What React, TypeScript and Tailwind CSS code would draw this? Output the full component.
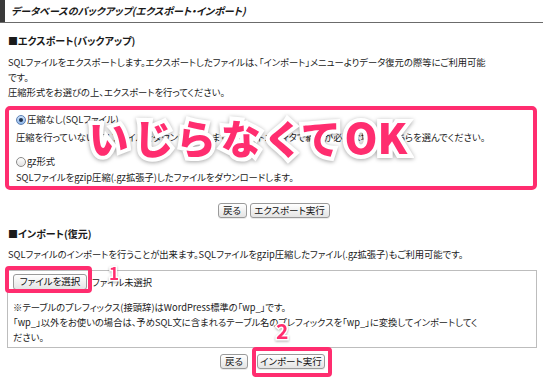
import React from "react";

function Btn({ children, className = "" }: { children: React.ReactNode; className?: string }) {
  return (
    <div
      className={
        "h-[15px] px-[5px] flex items-center justify-center whitespace-nowrap rounded-[3px] border border-[#9a9a9a] bg-gradient-to-b from-white to-[#e4e4e4] text-[9.5px] leading-none text-[#111] shadow-[0_1px_0_rgba(0,0,0,0.08)] " +
        className
      }
    >
      {children}
    </div>
  );
}

function Radio({ checked }: { checked?: boolean }) {
  return (
    <span
      className={
        "inline-flex w-[10px] h-[10px] rounded-full border items-center justify-center mr-[1px] " +
        (checked
          ? "border-[#5b7fb3] bg-gradient-to-b from-[#cfe3fb] to-[#8fb6e8]"
          : "border-[#8a8a8a] bg-gradient-to-b from-white to-[#e2e2e2]")
      }
    >
      {checked && <span className="w-[4px] h-[4px] rounded-full bg-[#1d2f4c]" />}
    </span>
  );
}

export default function App() {
  return (
    <div className="w-[546px] h-[382px] bg-white overflow-hidden relative text-[#1a1a1a] font-['Noto_Sans_CJK_JP','Noto_Sans',sans-serif] [font-feature-settings:'palt'] text-[9.3px] leading-[15px]">
      {/* header */}
      <div className="flex h-[23px] border-b border-[#6b6b6b] mr-[3px]">
        <div className="w-[5px] bg-[#3a3a3a]" />
        <div className="pl-[6px] text-[10px] font-bold italic leading-[22px]">
          データベースのバックアップ(エクスポート・インポート)
        </div>
      </div>

      {/* export heading */}
      <div className="ml-[8px] mt-[11px] text-[10px] font-bold leading-[14px]">■エクスポート(バックアップ)</div>
      <div className="ml-[8px] mt-[7px] whitespace-nowrap">
        <div>SQLファイルをエクスポートします。エクスポートしたファイルは、「インポート」メニューよりデータ復元の際等にご利用可能</div>
        <div>です。</div>
        <div>圧縮形式をお選びの上、エクスポートを行ってください。</div>
      </div>

      {/* pink box */}
      <div className="ml-[5px] mt-[6px] w-[532px] h-[84px] border-[4px] border-[#ff2d6f] rounded-[5px] pl-[7px] pt-[2px] whitespace-nowrap">
        <div className="flex items-center">
          <Radio checked />
          <span>圧縮なし(SQLファイル)</span>
        </div>
        <div className="mt-[3px]">圧縮を行っていないSQLファイルをダウンロードします。テキストエディタで編集が必要な場合はこちらを選んでください。</div>
        <div className="mt-[9px] flex items-center">
          <Radio />
          <span>gz形式</span>
        </div>
        <div className="mt-[1px]">SQLファイルをgzip圧縮(.gz拡張子)したファイルをダウンロードします。</div>
      </div>

      {/* export buttons */}
      <div className="mt-[13px] flex justify-center gap-[3px] pl-[1px]">
        <Btn className="w-[29px]">戻る</Btn>
        <Btn className="w-[80px]">エクスポート実行</Btn>
      </div>

      {/* import heading */}
      <div className="ml-[8px] mt-[9px] text-[10px] font-bold leading-[14px]">■インポート(復元)</div>
      <div className="ml-[8px] mt-[6px] whitespace-nowrap">
        SQLファイルのインポートを行うことが出来ます。SQLファイルをgzip圧縮したファイル(.gz拡張子)もご利用可能です。
      </div>

      {/* import box */}
      <div className="ml-[7px] mt-[8px] w-[530px] h-[78px] border border-[#bdbdbd] pl-[5px] pt-[3px] whitespace-nowrap">
        <div className="flex items-center gap-[5px]">
          <Btn className="w-[74px] h-[16px]">ファイルを選択</Btn>
          <span>ファイル未選択</span>
        </div>
        <div className="mt-[10px] pl-[9px] -indent-[9px]">
          <div>※テーブルのプレフィックス(接頭辞)はWordPress標準の「wp_」です。</div>
          <div>「wp_」以外をお使いの場合は、予めSQL文に含まれるテーブル名のプレフィックスを「wp_」に変換してインポートしてく</div>
          <div>ださい。</div>
        </div>
      </div>

      {/* import buttons */}
      <div className="mt-[6px] flex justify-center gap-[9px] pr-[1px]">
        <Btn className="w-[28px]">戻る</Btn>
        <Btn className="w-[68px]">インポート実行</Btn>
      </div>

      {/* annotations */}
      <div className="absolute left-[89px] top-[115px] text-[40px] font-black leading-none text-[#ff2d6f] [-webkit-text-stroke:8px_white] [paint-order:stroke_fill] [filter:drop-shadow(0_1px_2px_rgba(0,0,0,0.35))] whitespace-nowrap">
        <span className="tracking-[7px]">いじらなくて</span>
        <span className="text-[42px] tracking-[0px]">OK</span>
      </div>
      <div className="absolute left-[5px] top-[266px] w-[87px] h-[27px] border-[4px] border-[#ff2d6f] rounded-[4px]" />
      <div className="absolute left-[252px] top-[347px] w-[80px] h-[30px] border-[4px] border-[#ff2d6f] rounded-[4px]" />
      <div className="absolute left-[109px] top-[264px] text-[17px] font-bold leading-none text-[#ff2d6f] [-webkit-text-stroke:3px_white] [paint-order:stroke_fill] [filter:drop-shadow(0_1px_1px_rgba(0,0,0,0.3))]">
        1
      </div>
      <div className="absolute left-[276px] top-[320px] text-[21px] font-bold leading-none text-[#ff2d6f] [-webkit-text-stroke:3px_white] [paint-order:stroke_fill] [filter:drop-shadow(0_1px_1px_rgba(0,0,0,0.3))]">
        2
      </div>
    </div>
  );
}
